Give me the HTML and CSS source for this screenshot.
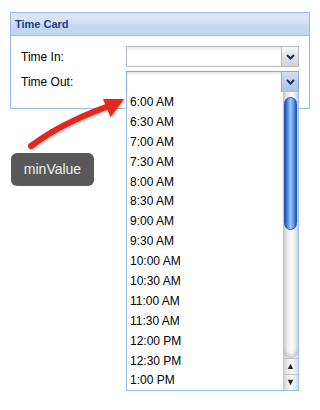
FILE: index.html
```html
<!DOCTYPE html>
<html lang="en">
<head>
  <meta charset="UTF-8">
  <title>Time Card</title>
  <link rel="stylesheet" href="styles.css">
</head>
<body>

<div class="panel">
  <div class="panel-header">Time Card</div>
  <div class="panel-body">
    <div class="form-row">
      <label class="field-label">Time In:</label>
      <div class="combo">
        <div class="combo-input"></div>
        <div class="combo-trigger">
          <svg width="9" height="6" viewBox="0 0 9 6"><polyline points="1,1 4.5,4.5 8,1" fill="none" stroke="#15306b" stroke-width="2"/></svg>
        </div>
      </div>
    </div>
    <div class="form-row">
      <label class="field-label">Time Out:</label>
      <div class="combo combo-focus">
        <div class="combo-input"></div>
        <div class="combo-trigger">
          <svg width="9" height="6" viewBox="0 0 9 6"><polyline points="1,1 4.5,4.5 8,1" fill="none" stroke="#15306b" stroke-width="2"/></svg>
        </div>
      </div>
    </div>
  </div>
</div>

<!-- dropdown list of the Time Out combo -->
<div class="combo-list">
  <div class="list-items">
    <div class="list-item">6:00 AM</div>
    <div class="list-item">6:30 AM</div>
    <div class="list-item">7:00 AM</div>
    <div class="list-item">7:30 AM</div>
    <div class="list-item">8:00 AM</div>
    <div class="list-item">8:30 AM</div>
    <div class="list-item">9:00 AM</div>
    <div class="list-item">9:30 AM</div>
    <div class="list-item">10:00 AM</div>
    <div class="list-item">10:30 AM</div>
    <div class="list-item">11:00 AM</div>
    <div class="list-item">11:30 AM</div>
    <div class="list-item">12:00 PM</div>
    <div class="list-item">12:30 PM</div>
    <div class="list-item">1:00 PM</div>
  </div>
  <div class="scrollbar">
    <div class="scroll-track">
      <div class="scroll-thumb"></div>
    </div>
    <div class="scroll-btn">&#9650;</div>
    <div class="scroll-btn">&#9660;</div>
  </div>
</div>

<svg class="callout-arrow" width="130" height="160" viewBox="0 0 130 160">
  <g class="arrow-shape">
    <path d="M31,146 Q60,124 106,107" fill="none" stroke="#e2281e" stroke-width="6" stroke-linecap="round"/>
    <polygon points="124,99 103,99 110.5,117" fill="#e2281e"/>
  </g>
</svg>

<div class="callout">minValue</div>

</body>
</html>
```

FILE: styles.css
```css
body {
  margin: 0;
  width: 320px;
  height: 410px;
  background-color: #fff;
  font-family: 'Liberation Sans', Arial, sans-serif;
  position: relative;
  overflow: hidden;
}

.panel {
  margin: 12px 0 0 10px;
  width: 298px;
  border: 1px solid #99bbe8;
}

.panel-header {
  height: 22px;
  line-height: 23px;
  padding-left: 4px;
  font-size: 11px;
  font-weight: bold;
  color: #15428b;
  background: linear-gradient(#dde7f5, #d4e1f3 45%, #c6d8f0 55%, #c3d6ef);
  border-bottom: 1px solid #99bbe8;
}

.panel-body {
  padding: 10px 0 16px 10px;
  display: flex;
  flex-direction: column;
  gap: 4px;
}

.form-row {
  display: flex;
  align-items: center;
  height: 21px;
}

.field-label {
  width: 105px;
  font-size: 12px;
  color: #000;
}

.combo {
  display: flex;
  width: 173px;
  height: 21px;
  box-sizing: border-box;
  border: 1px solid #b5b8c8;
}

.combo-input {
  flex: 1;
  background: linear-gradient(#e6e6e6, #fff 4px);
}

.combo-trigger {
  width: 16px;
  border-left: 1px solid #b5b8c8;
  background: linear-gradient(#f6f6f6, #e4e4e4 50%, #d2d2d2);
  display: flex;
  align-items: center;
  justify-content: center;
}

.combo-focus {
  border-color: #7eadd9;
  height: 22px;
}

.combo-focus .combo-trigger {
  border-left-color: #7eadd9;
  background: linear-gradient(#d3e1f3, #bcd0ea 50%, #a9c1e2);
}

.combo-list {
  position: absolute;
  left: 126px;
  top: 92px;
  width: 173px;
  height: 299px;
  box-sizing: border-box;
  border: 1px solid #98c0f4;
  border-top: none;
  background-color: #fff;
  overflow: hidden;
}

.list-items {
  font-size: 12px;
  color: #000;
}

.list-item {
  height: 19.9px;
  line-height: 21px;
  padding-left: 3px;
}

.scrollbar {
  position: absolute;
  top: 0;
  right: 0;
  bottom: 0;
  width: 15px;
  display: flex;
  flex-direction: column;
  background: linear-gradient(to right, #c9c9c9, #ececec 30%, #fbfbfb 60%, #dadada);
}

.scroll-track {
  flex: 1;
  padding: 5px 1px 0 1px;
  border-bottom: 1px solid #c4c4c4;
  border-radius: 0 0 7px 7px;
  box-shadow: inset 0 -3px 3px rgba(0, 0, 0, 0.12);
}

.scroll-thumb {
  height: 133px;
  box-sizing: border-box;
  border: 1px solid #2a54a8;
  border-radius: 7px;
  background: linear-gradient(to right, #1d4fc0, #4f8ff0 25%, #9cc8ff 50%, #5b9af2 75%, #2358c7);
}

.scroll-btn {
  height: 15px;
  font-size: 9px;
  line-height: 15px;
  text-align: center;
  color: #222;
  border-top: 1px solid #c4c4c4;
}

.callout-arrow {
  position: absolute;
  left: 0;
  top: 0;
}

.arrow-shape {
  filter: drop-shadow(1px 1px 1px rgba(0, 0, 0, 0.35));
}

.callout {
  position: absolute;
  left: 11px;
  top: 153px;
  width: 83px;
  height: 33px;
  border-radius: 6px;
  background-color: #585858;
  color: #f0f0f0;
  font-size: 14px;
  line-height: 33px;
  text-align: center;
}
```
